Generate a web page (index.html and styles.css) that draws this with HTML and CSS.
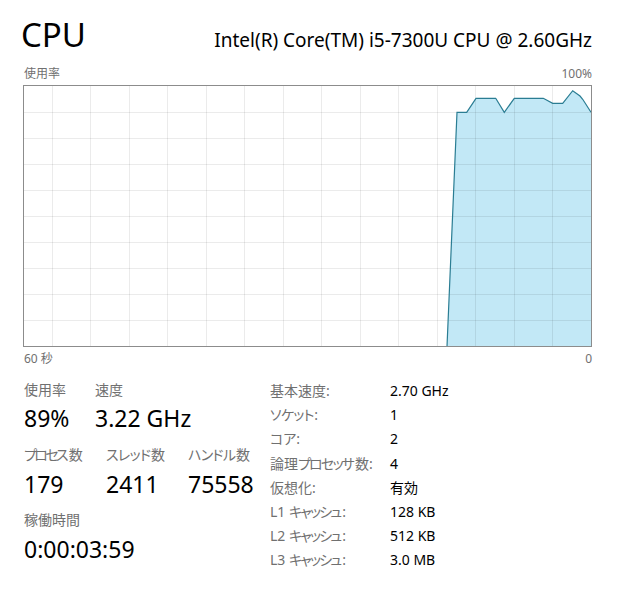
FILE: index.html
```html
<!DOCTYPE html>
<html lang="ja">
<head>
<meta charset="utf-8">
<title>CPU</title>
<link rel="stylesheet" href="styles.css">
</head>
<body>
<div class="page">
  <div class="header">
    <div class="title">CPU</div>
    <div class="model">Intel(R) Core(TM) i5-7300U CPU @ 2.60GHz</div>
  </div>
  <div class="graph-labels">
    <span>使用率</span>
    <span>100%</span>
  </div>
  <svg class="graph" width="569" height="262" viewBox="0 0 569 262">
    <rect x="0" y="0" width="569" height="262" fill="#ffffff"/>
    <polygon class="area" points="424,261.5 434,27.3 443.7,27.3 453,13.3 472.7,13.3 481.3,27.3 491.3,13.3 520.3,13.3 529.7,18.3 539.7,18.3 549.7,5.7 557,11 559.7,14.3 568,27.3 568,261.5"/>
    <g class="grid">
      <line x1="29.5" y1="0" x2="29.5" y2="262"/>
      <line x1="67.5" y1="0" x2="67.5" y2="262"/>
      <line x1="106.5" y1="0" x2="106.5" y2="262"/>
      <line x1="144.5" y1="0" x2="144.5" y2="262"/>
      <line x1="183.5" y1="0" x2="183.5" y2="262"/>
      <line x1="221.5" y1="0" x2="221.5" y2="262"/>
      <line x1="260.5" y1="0" x2="260.5" y2="262"/>
      <line x1="298.5" y1="0" x2="298.5" y2="262"/>
      <line x1="337.5" y1="0" x2="337.5" y2="262"/>
      <line x1="375.5" y1="0" x2="375.5" y2="262"/>
      <line x1="414.5" y1="0" x2="414.5" y2="262"/>
      <line x1="452.5" y1="0" x2="452.5" y2="262"/>
      <line x1="491.5" y1="0" x2="491.5" y2="262"/>
      <line x1="529.5" y1="0" x2="529.5" y2="262"/>
      <line x1="0" y1="27.5" x2="569" y2="27.5"/>
      <line x1="0" y1="53.5" x2="569" y2="53.5"/>
      <line x1="0" y1="79.5" x2="569" y2="79.5"/>
      <line x1="0" y1="105.5" x2="569" y2="105.5"/>
      <line x1="0" y1="131.5" x2="569" y2="131.5"/>
      <line x1="0" y1="157.5" x2="569" y2="157.5"/>
      <line x1="0" y1="183.5" x2="569" y2="183.5"/>
      <line x1="0" y1="209.5" x2="569" y2="209.5"/>
      <line x1="0" y1="235.5" x2="569" y2="235.5"/>
    </g>
    <polyline class="line" points="424,261.5 434,27.3 443.7,27.3 453,13.3 472.7,13.3 481.3,27.3 491.3,13.3 520.3,13.3 529.7,18.3 539.7,18.3 549.7,5.7 557,11 559.7,14.3 568,27.3"/>
    <rect class="frame" x="0.5" y="0.5" width="568" height="261"/>
  </svg>
  <div class="axis-labels">
    <span>60 秒</span>
    <span>0</span>
  </div>
  <div class="stats">
    <div class="stats-left">
      <div class="row row-a">
        <div class="stat">
          <div class="label">使用率</div>
          <div class="value">89%</div>
        </div>
        <div class="stat">
          <div class="label">速度</div>
          <div class="value">3.22 GHz</div>
        </div>
      </div>
      <div class="row row-b">
        <div class="stat">
          <div class="label"><span class="kn3">プロセ</span>ス数</div>
          <div class="value">179</div>
        </div>
        <div class="stat">
          <div class="label"><span class="kn1">スレッ</span>ド数</div>
          <div class="value">2411</div>
        </div>
        <div class="stat">
          <div class="label"><span class="kn1">ハンド</span>ル数</div>
          <div class="value">75558</div>
        </div>
      </div>
      <div class="row row-c">
        <div class="stat">
          <div class="label">稼働時間</div>
          <div class="value">0:00:03:59</div>
        </div>
      </div>
    </div>
    <div class="stats-right">
      <div class="k">基本速度:</div><div class="v">2.70 GHz</div>
      <div class="k"><span class="kn1">ソケッ</span>ト:</div><div class="v">1</div>
      <div class="k">コア:</div><div class="v">2</div>
      <div class="k">論理<span class="kn2">プロセッ</span>サ数:</div><div class="v">4</div>
      <div class="k">仮想化:</div><div class="v">有効</div>
      <div class="k">L1 <span class="kn2">キャッシ</span>ュ:</div><div class="v">128 KB</div>
      <div class="k">L2 <span class="kn2">キャッシ</span>ュ:</div><div class="v">512 KB</div>
      <div class="k">L3 <span class="kn2">キャッシ</span>ュ:</div><div class="v">3.0 MB</div>
    </div>
  </div>
</div>
</body>
</html>
```

FILE: styles.css
```css
html, body {
  margin: 0;
  padding: 0;
  background: #ffffff;
}

body {
  font-family: "Noto Sans", "Noto Sans CJK JP", sans-serif;
  color: #000000;
  font-feature-settings: "palt";
}

.page {
  width: 617px;
  height: 592px;
  box-sizing: border-box;
  padding: 0 25px 0 22px;
}

.header {
  display: flex;
  justify-content: space-between;
  align-items: baseline;
  height: 65px;
  box-sizing: border-box;
  padding-top: 18px;
}

.title {
  font-size: 33px;
  line-height: 34px;
  margin-left: -1px;
}

.model {
  font-size: 19px;
  line-height: 20px;
}

.graph-labels,
.axis-labels {
  display: flex;
  justify-content: space-between;
  font-size: 12px;
  line-height: 16px;
  color: #707070;
  padding-left: 2px;
}

.graph-labels {
  margin-bottom: 3px;
  margin-top: 1px;
}

.axis-labels {
  margin-top: 4px;
}

.graph {
  display: block;
  margin-left: 1px;
}

.graph .area {
  fill: #c2e8f6;
}

.graph .grid line {
  stroke: rgba(0, 0, 0, 0.08);
  stroke-width: 1;
}

.graph .line {
  fill: none;
  stroke: #2a7d93;
  stroke-width: 1.2;
}

.graph .frame {
  fill: none;
  stroke: #8c8c8c;
  stroke-width: 1;
}

.stats {
  display: flex;
  margin-top: 14px;
  padding-left: 2px;
}

.stats-left {
  width: 246px;
  display: flex;
  flex-direction: column;
}

.row {
  display: flex;
}

.row-a .stat:first-child {
  width: 71px;
}

.row-b .stat {
  width: 83px;
}

.row-b {
  margin-top: 13px;
}

.row-c {
  margin-top: 12px;
}

.label {
  font-size: 14px;
  line-height: 18px;
  color: #707070;
}

.kn1 {
  letter-spacing: -0.7px;
}

.kn2 {
  letter-spacing: -1.8px;
}

.kn3 {
  letter-spacing: -2.6px;
}

.value {
  font-size: 23px;
  line-height: 30px;
  margin-top: 4px;
}

.row-b .value,
.row-c .value {
  margin-top: 5px;
}

.stats-right {
  display: grid;
  grid-template-columns: 120px auto;
  font-size: 14px;
  line-height: 24.2px;
  margin-top: -2px;
}

.stats-right .k {
  color: #707070;
}

.stats-right .v {
  color: #000000;
}
```
